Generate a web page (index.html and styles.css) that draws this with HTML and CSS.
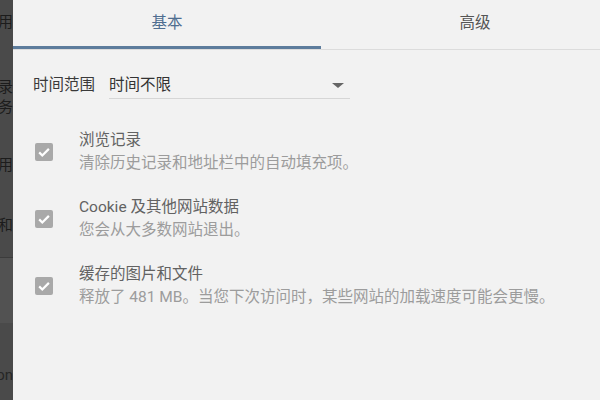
FILE: index.html
```html
<!DOCTYPE html>
<html lang="zh-CN">
<head>
<meta charset="utf-8">
<title>清除浏览数据</title>
<link rel="stylesheet" href="styles.css">
</head>
<body>
<div class="screen">
  <div class="page-strip">
    <div class="strip-line first"><span>常用</span></div>
    <div class="strip-line l2"><span>浏览记录</span></div>
    <div class="strip-line"><span>服务</span></div>
    <div class="strip-line l4"><span>常用</span></div>
    <div class="strip-line l5"><span>Cookie 和</span></div>
    <div class="strip-band"></div>
    <div class="strip-line l7"><span>Chrome on</span></div>
  </div>
  <div class="dialog">
    <div class="tabs">
      <div class="tab active">基本</div>
      <div class="tab">高级</div>
    </div>
    <div class="body">
      <div class="range-row">
        <span class="range-label">时间范围</span>
        <div class="select">
          <span class="select-value">时间不限</span>
          <span class="caret"></span>
        </div>
      </div>
      <div class="option">
        <span class="checkbox"><svg viewBox="0 0 18 18" width="18" height="18"><path d="M4.2 9.4l3.1 3.1L13.9 5.9" fill="none" stroke="#fff" stroke-width="2.2"/></svg></span>
        <div class="option-text">
          <div class="option-title">浏览记录</div>
          <div class="option-sub">清除历史记录和地址栏中的自动填充项。</div>
        </div>
      </div>
      <div class="option">
        <span class="checkbox"><svg viewBox="0 0 18 18" width="18" height="18"><path d="M4.2 9.4l3.1 3.1L13.9 5.9" fill="none" stroke="#fff" stroke-width="2.2"/></svg></span>
        <div class="option-text">
          <div class="option-title">Cookie 及其他网站数据</div>
          <div class="option-sub">您会从大多数网站退出。</div>
        </div>
      </div>
      <div class="option">
        <span class="checkbox"><svg viewBox="0 0 18 18" width="18" height="18"><path d="M4.2 9.4l3.1 3.1L13.9 5.9" fill="none" stroke="#fff" stroke-width="2.2"/></svg></span>
        <div class="option-text">
          <div class="option-title">缓存的图片和文件</div>
          <div class="option-sub">释放了 481 MB。当您下次访问时，某些网站的加载速度可能会更慢。</div>
        </div>
      </div>
    </div>
  </div>
</div>
</body>
</html>
```
FILE: styles.css
```css
html, body {
  margin: 0;
  padding: 0;
  width: 600px;
  height: 400px;
  overflow: hidden;
  background: #f2f2f2;
}
.screen {
  display: flex;
  width: 600px;
  height: 400px;
  overflow: hidden;
  font-family: Roboto, "Noto Sans CJK SC", sans-serif;
}
.page-strip {
  flex: 0 0 13px;
  width: 13px;
  background: #4a4a4a;
  display: flex;
  flex-direction: column;
  overflow: hidden;
}
.strip-line {
  display: flex;
  justify-content: flex-end;
  height: 20px;
  line-height: 20px;
  font-size: 15px;
  color: #1c1c1c;
  white-space: nowrap;
  overflow: hidden;
}
.strip-line span { flex: 0 0 auto; }
.strip-line.first { margin-top: 12px; }
.strip-line.l2 { margin-top: 45px; }
.strip-line.l4 { margin-top: 38px; }
.strip-line.l5 { margin-top: 40px; }
.strip-band {
  margin-top: 22px;
  height: 66px;
  border-top: 1px solid #3c3c3c;
  background: #525252;
  box-sizing: border-box;
}
.strip-line.l7 { margin-top: 42px; color: #262626; }
.dialog {
  flex: 0 0 616px;
  width: 616px;
  background: #f2f2f2;
}
.tabs {
  display: flex;
  border-bottom: 1px solid #dcdcdc;
}
.tab {
  flex: 1;
  height: 49px;
  line-height: 47px;
  text-align: center;
  font-size: 15.5px;
  color: #555;
}
.tab.active {
  color: #4f6e90;
  box-shadow: inset 0 -3px 0 #5d7c9c;
}
.body {
  padding-left: 20px;
}
.range-row {
  display: flex;
  align-items: flex-start;
  margin-top: 24px;
  font-size: 15.5px;
}
.range-label {
  line-height: 23px;
  color: #3a3a3a;
  margin-right: 14px;
}
.select {
  width: 241px;
  display: flex;
  align-items: center;
  justify-content: space-between;
  height: 25px;
  border-bottom: 1px solid #d6d6d6;
  box-sizing: border-box;
  padding-bottom: 1px;
}
.select-value {
  line-height: 23px;
  color: #333;
}
.caret {
  width: 0;
  height: 0;
  border-left: 6px solid transparent;
  border-right: 6px solid transparent;
  border-top: 5px solid #666;
  margin-right: 6px;
}
.option {
  display: flex;
  align-items: center;
  margin-top: 30px;
}
.option + .option { margin-top: 21px; }
.checkbox {
  flex: 0 0 18px;
  width: 18px;
  height: 18px;
  margin-left: 2px;
  margin-right: 26px;
  background: #a9a9a9;
  border-radius: 2px;
  display: block;
}
.checkbox svg { display: block; }
.option-text {
  font-size: 15.5px;
  line-height: 23px;
}
.option-title { color: #626262; }
.option-sub { color: #9c9c9c; }
```
